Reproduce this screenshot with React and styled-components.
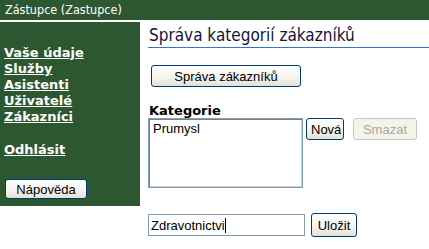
import React from "react";
import styled, { createGlobalStyle } from "styled-components";

const GlobalStyle = createGlobalStyle`
  body {
    margin: 0;
    background: #ffffff;
    font-family: "DejaVu Sans", Verdana, sans-serif;
  }
  * {
    box-sizing: border-box;
  }
`;

const StyledPage = styled.div`
  display: flex;
  flex-direction: column;
  width: 429px;
`;

const StyledHeader = styled.div`
  height: 22px;
  background: #2d5730;
  color: #ffffff;
  font-family: "DejaVu Sans Condensed", "DejaVu Sans", sans-serif;
  font-size: 12.5px;
  line-height: 20px;
  padding-left: 5px;
  border-bottom: 2px solid #ffffff;
`;

const StyledBody = styled.div`
  display: flex;
  align-items: flex-start;
`;

const StyledSidebar = styled.div`
  width: 140px;
  height: 184px;
  flex-shrink: 0;
  background: #2d5730;
  display: flex;
  flex-direction: column;
  padding: 23px 0 0 4px;
`;

const StyledMenuLink = styled.a`
  color: #ffffff;
  font-weight: bold;
  font-size: 13px;
  line-height: 16px;
  text-decoration: underline;
  margin-top: ${(p) => (p.$gap ? "17px" : "0")};
`;

const StyledButton = styled.button`
  font-family: "Liberation Sans", Arial, sans-serif;
  font-size: 13px;
  color: ${(p) => (p.disabled ? "#aca899" : "#000000")};
  height: 22px;
  padding: 0 4px;
  border: 1px solid ${(p) => (p.disabled ? "#cac8bb" : "#003c74")};
  border-radius: 3px;
  background: ${(p) =>
    p.disabled
      ? "#f5f4ea"
      : "linear-gradient(#ffffff 0%, #f4f3ee 60%, #e3e1d6 100%)"};
  width: ${(p) => p.$width || "auto"};
`;

const StyledHelpButton = styled(StyledButton)`
  align-self: flex-start;
  margin: 21px 0 0 1px;
  width: 82px;
  height: 20px;
`;

const StyledMain = styled.div`
  flex: 1;
  display: flex;
  flex-direction: column;
  padding: 3px 0 0 8px;
`;

const StyledTitle = styled.h1`
  margin: 0;
  font-family: "DejaVu Sans Condensed", "DejaVu Sans", sans-serif;
  font-weight: normal;
  font-size: 17px;
  color: #141440;
  padding: 0 0 2px 1px;
  border-bottom: 1px solid #3377cc;
  line-height: 20px;
`;

const StyledSection = styled.div`
  display: flex;
  flex-direction: column;
  align-items: flex-start;
`;

const StyledLabel = styled.div`
  font-weight: bold;
  font-size: 13px;
  margin: 16px 0 0 1px;
  line-height: 15px;
  color: #000000;
`;

const StyledRow = styled.div`
  display: flex;
  align-items: flex-start;
  gap: ${(p) => p.$gap || "3px"};
  margin-top: ${(p) => p.$top || "0"};
`;

const StyledList = styled.div`
  width: 155px;
  height: 70px;
  border: 1px solid #7f9db9;
  box-shadow: inset 1px 1px 0 #808080, inset -1px -1px 0 #d4d0c8;
  font-family: "Liberation Sans", Arial, sans-serif;
  font-size: 13px;
  padding: 2px 4px;
  color: #000000;
`;

const StyledInput = styled.div`
  width: 157px;
  height: 22px;
  border: 1px solid #7f9db9;
  font-family: "Liberation Sans", Arial, sans-serif;
  font-size: 13px;
  padding-left: 2px;
  color: #000000;
  display: flex;
  align-items: center;
`;

const StyledCaret = styled.span`
  display: inline-block;
  width: 1px;
  height: 15px;
  background: #000000;
`;

export default function App() {
  return (
    <StyledPage>
      <GlobalStyle />
      <StyledHeader>Zástupce (Zastupce)</StyledHeader>
      <StyledBody>
        <StyledSidebar>
          <StyledMenuLink href="#">Vaše údaje</StyledMenuLink>
          <StyledMenuLink href="#">Služby</StyledMenuLink>
          <StyledMenuLink href="#">Asistenti</StyledMenuLink>
          <StyledMenuLink href="#">Uživatelé</StyledMenuLink>
          <StyledMenuLink href="#">Zákazníci</StyledMenuLink>
          <StyledMenuLink href="#" $gap>
            Odhlásit
          </StyledMenuLink>
          <StyledHelpButton>Nápověda</StyledHelpButton>
        </StyledSidebar>
        <StyledMain>
          <StyledTitle>Správa kategorií zákazníků</StyledTitle>
          <StyledSection>
            <StyledButton $width="150px" style={{ marginTop: 17, marginLeft: 3 }}>
              Správa zákazníků
            </StyledButton>
            <StyledLabel>Kategorie</StyledLabel>
            <StyledRow>
              <StyledList>Prumysl</StyledList>
              <StyledButton $width="38px">Nová</StyledButton>
              <StyledButton $width="64px" disabled style={{ marginLeft: 6 }}>
                Smazat
              </StyledButton>
            </StyledRow>
            <StyledRow $top="26px" $gap="6px">
              <StyledInput>
                Zdravotnictvi
                <StyledCaret />
              </StyledInput>
              <StyledButton $width="46px" style={{ height: 24, marginTop: -1 }}>
                Uložit
              </StyledButton>
            </StyledRow>
          </StyledSection>
        </StyledMain>
      </StyledBody>
    </StyledPage>
  );
}
